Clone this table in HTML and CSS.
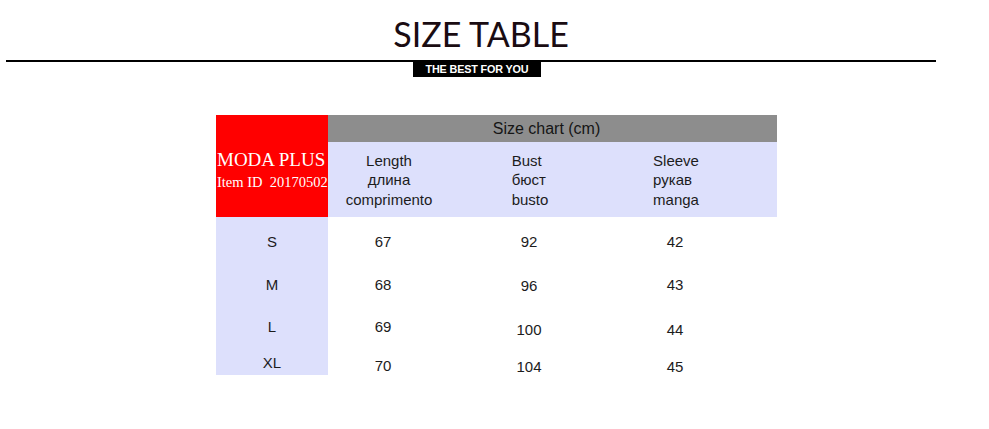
FILE: index.html
```html
<!DOCTYPE html>
<html>
<head>
<meta charset="utf-8">
<link rel="stylesheet" href="styles.css">
</head>
<body>
<div class="page">
  <header class="head">
    <h1 class="title">SIZE TABLE</h1>
    <div class="rule"></div>
    <div class="badge">THE BEST FOR YOU</div>
  </header>

  <div class="chart">
    <div class="brand">
      <div class="brand-name">MODA PLUS</div>
      <div class="brand-id">Item ID  20170502</div>
    </div>
    <div class="chart-title">Size chart (cm)</div>

    <div class="label label-center">
      <div>Length</div><div>длина</div><div>comprimento</div>
    </div>
    <div class="label"><div class="stack"><div>Bust</div><div>бюст</div><div>busto</div></div></div>
    <div class="label"><div class="stack"><div>Sleeve</div><div>рукав</div><div>manga</div></div></div>
    <div class="label"></div>

    <div class="size">S</div>
    <div class="val v-len">67</div>
    <div class="val">92</div>
    <div class="val">42</div>
    <div class="val"></div>

    <div class="size">M</div>
    <div class="val v-len">68</div>
    <div class="val down1">96</div>
    <div class="val">43</div>
    <div class="val"></div>

    <div class="size">L</div>
    <div class="val v-len">69</div>
    <div class="val down3">100</div>
    <div class="val down3">44</div>
    <div class="val"></div>

    <div class="size">XL</div>
    <div class="val v-len down3">70</div>
    <div class="val down4">104</div>
    <div class="val down4">45</div>
    <div class="val"></div>
  </div>
</div>
</body>
</html>
```

FILE: styles.css
```css
* { box-sizing: border-box; }

html, body {
  margin: 0;
  padding: 0;
  background: #ffffff;
}

body {
  width: 989px;
  height: 429px;
  overflow: hidden;
  font-family: "Liberation Sans", Arial, sans-serif;
  color: #1c1c1c;
}

.page {
  padding-top: 16px;
}

.head {
  margin-left: 6px;
  width: 930px;
  display: flex;
  flex-direction: column;
  align-items: center;
}

.title {
  margin: 0 0 8px 0;
  padding-left: 20px;
  font-family: Lato, "Open Sans", sans-serif;
  font-weight: 400;
  font-size: 34px;
  line-height: 36px;
  letter-spacing: 0;
  color: #1a0c12;
}

.rule {
  width: 100%;
  height: 2px;
  background: #000;
}

.badge {
  width: 128px;
  height: 15px;
  margin-left: 12px;
  background: #000;
  color: #fff;
  font-family: "Liberation Sans", Arial, sans-serif;
  font-weight: 700;
  font-size: 10.8px;
  line-height: 15px;
  letter-spacing: -0.15px;
  text-align: center;
}

.chart {
  margin: 38px 0 0 216px;
  width: 561px;
  display: grid;
  grid-template-columns: 112px 122px 158px 134px 35px;
  grid-template-rows: 27px 75px 48px 38px 46px 26px;
  font-size: 15px;
}

.brand {
  grid-row: 1 / 3;
  grid-column: 1;
  background: #ff0000;
  color: #fff;
  font-family: "Liberation Serif", "Times New Roman", serif;
  padding: 34px 0 0 1px;
  overflow: hidden;
}

.brand-name {
  font-size: 19px;
  line-height: 22px;
  white-space: nowrap;
}

.brand-id {
  font-size: 14.5px;
  line-height: 22px;
  white-space: pre;
}

.chart-title {
  grid-row: 1;
  grid-column: 2 / 6;
  background: #8d8d8d;
  color: #151515;
  font-size: 16px;
  line-height: 27px;
  text-align: center;
  padding-right: 12px;
}

.label {
  background: #dde0fc;
  display: flex;
  flex-direction: column;
  justify-content: center;
  align-items: center;
  line-height: 19.5px;
  padding-top: 1px;
}

.label-center {
  text-align: center;
}

.stack {
  text-align: left;
  padding-left: 2px;
}

.size {
  background: #dde0fc;
  display: flex;
  align-items: center;
  justify-content: center;
}

.val {
  display: flex;
  align-items: center;
  justify-content: center;
}

.v-len {
  padding-right: 12px;
}

.down1 { padding-top: 2px; }
.down3 { padding-top: 6px; }
.down4 { padding-top: 8px; }
```
